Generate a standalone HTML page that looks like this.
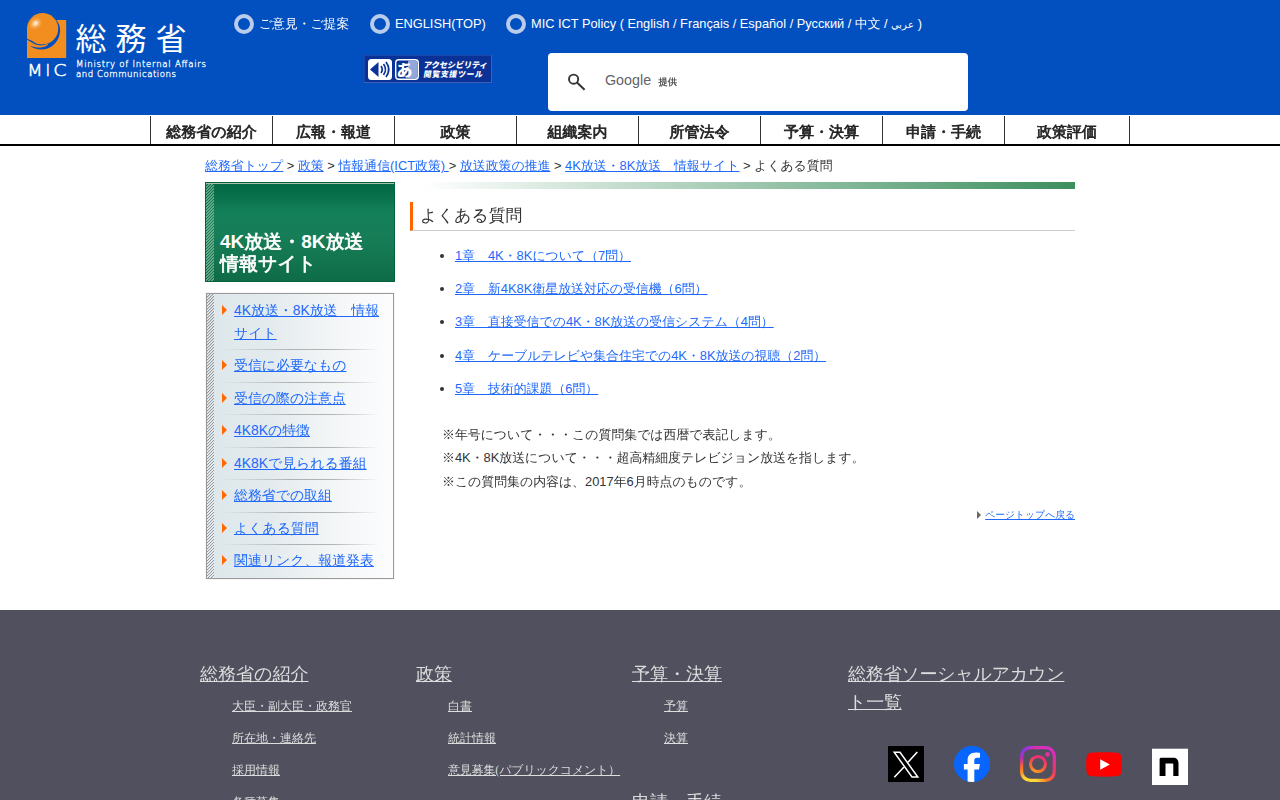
<!DOCTYPE html>
<html lang="ja">
<head>
<meta charset="utf-8">
<title>よくある質問</title>
<style>
html,body{margin:0;padding:0;}
.fb{font-weight:normal;-webkit-text-stroke:0.6px currentColor;}
body{width:1280px;height:800px;overflow:hidden;background:#fff;font-family:"Liberation Sans","WenQuanYi Zen Hei",sans-serif;color:#333;position:relative;}
a{color:#1f69fa;text-decoration:underline;}
#hd{position:absolute;left:0;top:0;width:1280px;height:115px;background:#0250c0;}
#logo{position:absolute;left:0;top:0;}
.tl{position:absolute;top:14px;height:20px;line-height:20px;font-size:12.8px;color:#fff;white-space:nowrap;}
.tl i{position:absolute;left:-25px;top:0px;width:12px;height:12px;border:4px solid #b9cceb;border-radius:50%;box-sizing:content-box;}
#acc{position:absolute;left:364px;top:55px;width:128px;height:28px;background:#0a3296;box-shadow:inset -1px -1px 0 #3f5fb8,inset 1px 1px 0 #1d45a8;}
#srch{position:absolute;left:548px;top:53px;width:420px;height:58px;background:#fff;border-radius:4px;}
#nav{position:absolute;left:0;top:115px;width:1280px;height:29px;border-bottom:2px solid #000;background:#fff;}
#nav div{position:absolute;top:1px;height:28px;width:121px;border-left:1px solid #333;text-align:center;font-weight:normal;-webkit-text-stroke:0.68px #222;font-size:15px;line-height:32px;color:#222;}
#bc{position:absolute;left:205px;top:156px;font-size:12.9px;line-height:20px;white-space:nowrap;color:#333;}
#gbar{position:absolute;left:410px;top:182px;width:665px;height:7px;background:linear-gradient(90deg,#fff 0%,#fff 2%,#3d8f5e 100%);}
#stitle{position:absolute;left:205px;top:182px;width:190px;height:100px;box-sizing:border-box;border:1px solid #05623c;background:linear-gradient(180deg,#046a46 0%,#056c48 8%,#14805a 30%,#167d57 55%,#127550 80%,#0e6b47 100%);}
#stitle:before{content:"";position:absolute;left:0;top:0;right:0;height:1px;background:#a5c2a8;}
#stitle:after{content:"";position:absolute;left:0;top:1px;width:8px;bottom:0;background:repeating-linear-gradient(135deg,rgba(170,210,180,.55) 0,rgba(170,210,180,.55) 1px,rgba(170,210,180,0) 1px,rgba(170,210,180,0) 2.12px);}
#stitle p{position:absolute;left:14px;top:48px;margin:0;color:#fff;font-weight:bold;font-size:19px;line-height:22px;white-space:nowrap;}
#stitle .fb{-webkit-text-stroke:0.72px #fff;}
#smenu{position:absolute;left:206px;top:293px;width:188px;height:286px;box-sizing:border-box;border:1px solid #999;box-shadow:0 0 0 1px #f7f7f7;background:linear-gradient(90deg,#dde7eb 0%,#e4ebee 35%,#f2f5f6 65%,#fdfdfe 100%);}
#smenu .hatch{position:absolute;left:0;top:0;width:7px;bottom:0;background:#e3ecf0 repeating-linear-gradient(135deg,#999 0,#999 0.55px,rgba(153,153,153,0) 0.8px,rgba(153,153,153,0) 2.12px);}
#smenu a{position:absolute;left:27px;font-size:13.9px;line-height:23px;white-space:nowrap;}
#smenu b{position:absolute;left:15px;width:0;height:0;margin-top:-0.3px;border-left:5.6px solid #ff6a00;border-top:5px solid transparent;border-bottom:5px solid transparent;}
#smenu s{position:absolute;left:13px;width:160px;height:1px;background:linear-gradient(90deg,rgba(170,170,170,0),#b0b0b0 45%,#b4b4b4 70%,rgba(170,170,170,0));}
#h1{position:absolute;left:410px;top:202px;width:665px;height:29px;box-sizing:border-box;border-left:3px solid #ff6600;border-bottom:1px solid #ccc;font-size:16.8px;line-height:27px;padding-left:7px;color:#333;}
.li{position:absolute;left:455px;font-size:12.9px;line-height:20px;white-space:nowrap;}
.li:before{content:"";position:absolute;left:-15px;top:8px;width:4px;height:4px;border-radius:50%;background:#333;}
.nt{position:absolute;left:442px;font-size:12.9px;line-height:20px;white-space:nowrap;color:#333;}
#ptop{position:absolute;right:205px;top:507px;font-size:9.8px;line-height:16px;white-space:nowrap;}
#ptop:before{content:"";position:absolute;left:-8.5px;top:4px;border-left:4.5px solid #666;border-top:4px solid transparent;border-bottom:4px solid transparent;}
#ft{position:absolute;left:0;top:610px;width:1280px;height:190px;background:#50505f;font-family:"Liberation Serif","WenQuanYi Zen Hei",serif;}
#ft a{color:#ddd;position:absolute;white-space:nowrap;}
#ft .h{font-size:18px;line-height:28px;}
#ft .s{font-size:12px;line-height:18px;}
</style>
</head>
<body>
<div id="hd">
<svg id="logo" width="220" height="115" viewBox="0 0 220 115">
<defs><radialGradient id="ball" cx="35.6" cy="23.4" r="7.5" gradientUnits="userSpaceOnUse" gradientTransform="rotate(-35 35.6 23.4) scale(1 0.8) translate(0 5.85)"><stop offset="0" stop-color="#fff0dc"/><stop offset="0.25" stop-color="#fcd7aa"/><stop offset="0.6" stop-color="#f6a448"/><stop offset="1" stop-color="#f28d1f"/></radialGradient></defs>
<rect x="27" y="20" width="39.2" height="38" fill="#f28d1f"/>
<path d="M56.4 20 C59 23.5 60.3 27 60.1 30.6 C59.9 35.5 58.3 39.7 55.75 42.5 C53 45.7 50 47.9 47 48.75 C44 49.6 41 49.6 38.25 49.25 C35 48.8 32 47.6 30.1 46.1 L27 39.7 L27 38.4 C28.5 39.3 30 40 31.4 40.6 C33 41.6 34.5 42.7 36.4 43.4 C38.5 44.1 40.5 44.3 42.6 44.25 L42.6 28 Z" fill="#0250c0"/>
<path d="M27 39.7 C28.5 40.6 30 41.4 31.4 42.2 C33 43.2 34.6 44.1 36.4 44.7 C38.4 45.3 40.5 45.5 42.6 45.3 C44.8 45.1 46.7 44.5 48.25 43.6 C47.8 45 46.9 45.8 45.75 46.25 C44.2 47 42.5 47.4 40.75 47.5 C38.6 47.6 36.5 47.4 34.5 47 C33 46.8 31.5 46.5 30.1 46.1 L27 46.1 Z" fill="#f28d1f"/>
<rect x="27" y="20" width="12" height="9" fill="#0250c0"/>
<circle cx="42.6" cy="28.7" r="15.6" fill="url(#ball)"/>
<g font-family="DejaVu Sans, Liberation Sans, sans-serif" font-weight="200" font-size="15.6" fill="#fff" stroke="#fff" stroke-width="0.5"><text transform="translate(27.3 76.1) scale(1.14 1)">M</text><text transform="translate(45.46 76.1)">I</text><text transform="translate(53.34 76.1) scale(1.22 1)">C</text></g>
<text x="75.5" y="49.5" font-family="Liberation Sans, Noto Sans CJK JP, sans-serif" font-size="31" fill="#fff" style="letter-spacing:9px">総務省</text>
<text x="76" y="67" font-family="DejaVu Sans, Liberation Sans, sans-serif" font-weight="200" font-size="8.6" fill="#fff" stroke="#fff" stroke-width="0.3" textLength="130" lengthAdjust="spacing">Ministry of Internal Affairs</text>
<text x="76" y="76.8" font-family="DejaVu Sans, Liberation Sans, sans-serif" font-weight="200" font-size="8.6" fill="#fff" stroke="#fff" stroke-width="0.3" textLength="100" lengthAdjust="spacing">and Communications</text>
</svg>
<div class="tl" style="left:259px"><i></i>ご意見・ご提案</div>
<div class="tl" style="left:395px"><i></i>ENGLISH(TOP)</div>
<div class="tl" style="left:531px"><i></i>MIC ICT Policy ( English / Français / Español / Русский / 中文 / <span style="font-size:10.2px">عربي</span> )</div>
<div id="acc"><svg width="128" height="28" viewBox="0 0 128 28">
<rect x="4" y="4" width="24" height="21" rx="3.5" fill="#fff"/>
<path d="M6 14.5 L14.5 7 V22 Z" fill="#0a3296"/>
<path d="M17 11 Q19.5 14.5 17 18 M19.5 9 Q23.5 14.5 19.5 20 M22 7 Q27.5 14.5 22 22" fill="none" stroke="#0a3296" stroke-width="1.7"/>
<rect x="31.7" y="4.7" width="22.6" height="19.6" rx="3" fill="#0a3296" stroke="#fff" stroke-width="1.4"/>
<path d="M44 5.4 H51.3 Q53.6 5.4 53.6 7.7 V21.3 Q53.6 23.6 51.3 23.6 H44 Z" fill="#93a8da"/>
<text x="32.6" y="20.6" font-family="Liberation Sans, Noto Sans CJK JP, sans-serif" font-weight="900" font-size="16" fill="#fff">あ</text>
<text x="61.6" y="13.4" font-family="Liberation Sans, Noto Sans CJK JP, sans-serif" font-weight="900" font-size="8.3" fill="#fff" transform="skewX(-10)" style="letter-spacing:0px" textLength="64">アクセシビリティ</text>
<text x="63.2" y="22.2" font-family="Liberation Sans, Noto Sans CJK JP, sans-serif" font-weight="900" font-size="7.8" fill="#fff" transform="skewX(-10)" textLength="59">閲覧支援ツール</text>
</svg></div>
<div id="srch"><svg width="420" height="58" viewBox="0 0 420 58" style="position:absolute;left:0;top:0">
<circle cx="25.6" cy="26.2" r="4.6" fill="none" stroke="#333" stroke-width="1.9"/>
<path d="M29 29.6 L36.6 36.7" stroke="#333" stroke-width="2" fill="none"/>
<text x="57" y="32.3" font-family="Liberation Sans, sans-serif" font-size="14.3" fill="#5f6368">Google</text>
<text x="110.5" y="32.3" font-family="Liberation Sans, WenQuanYi Zen Hei, sans-serif" font-size="9.3" fill="#444" stroke="#444" stroke-width="0.25">提供</text>
</svg></div>
</div>
<div id="nav">
<div style="left:150px">総務省の紹介</div>
<div style="left:272px">広報・報道</div>
<div style="left:394px">政策</div>
<div style="left:516px">組織案内</div>
<div style="left:638px">所管法令</div>
<div style="left:760px">予算・決算</div>
<div style="left:882px">申請・手続</div>
<div style="left:1004px;width:124px;border-right:1px solid #333">政策評価</div>
</div>
<div id="bc"><a>総務省トップ</a> &gt; <a>政策</a> &gt; <a>情報通信(ICT政策) </a>&gt; <a>放送政策の推進</a> &gt; <a>4K放送・8K放送　情報サイト</a> &gt; よくある質問</div>
<div id="gbar"></div>
<div id="stitle"><p>4K<span class="fb">放送・</span>8K<span class="fb">放送</span><br><span class="fb">情報サイト</span></p></div>
<div id="smenu"><div class="hatch"></div>
<b style="top:11px"></b><a style="top:5px">4K放送・8K放送　情報<br>サイト</a><s style="top:55px"></s>
<b style="top:66px"></b><a style="top:60px">受信に必要なもの</a><s style="top:88px"></s>
<b style="top:99px"></b><a style="top:93px">受信の際の注意点</a><s style="top:120px"></s>
<b style="top:131px"></b><a style="top:125px">4K8Kの特徴</a><s style="top:153px"></s>
<b style="top:164px"></b><a style="top:158px">4K8Kで見られる番組</a><s style="top:185px"></s>
<b style="top:196px"></b><a style="top:190px">総務省での取組</a><s style="top:218px"></s>
<b style="top:229px"></b><a style="top:223px">よくある質問</a><s style="top:250px"></s>
<b style="top:261px"></b><a style="top:255px">関連リンク、報道発表</a>
</div>
<div id="h1">よくある質問</div>
<div class="li" style="top:246px"><a>1章　4K・8Kについて（7問）</a></div>
<div class="li" style="top:279px"><a>2章　新4K8K衛星放送対応の受信機（6問）</a></div>
<div class="li" style="top:312px"><a>3章　直接受信での4K・8K放送の受信システム（4問）</a></div>
<div class="li" style="top:346px"><a>4章　ケーブルテレビや集合住宅での4K・8K放送の視聴（2問）</a></div>
<div class="li" style="top:379px"><a>5章　技術的課題（6問）</a></div>
<div class="nt" style="top:425px">※年号について・・・この質問集では西暦で表記します。</div>
<div class="nt" style="top:448px">※4K・8K放送について・・・超高精細度テレビジョン放送を指します。</div>
<div class="nt" style="top:472px">※この質問集の内容は、2017年6月時点のものです。</div>
<div id="ptop"><a>ページトップへ戻る</a></div>
<div id="ft">
<a class="h" style="left:200px;top:50px">総務省の紹介</a>
<a class="s" style="left:232px;top:87px">大臣・副大臣・政務官</a>
<a class="s" style="left:232px;top:119px">所在地・連絡先</a>
<a class="s" style="left:232px;top:151px">採用情報</a>
<a class="s" style="left:232px;top:183px">各種募集</a>
<a class="h" style="left:416px;top:50px">政策</a>
<a class="s" style="left:448px;top:87px">白書</a>
<a class="s" style="left:448px;top:119px">統計情報</a>
<a class="s" style="left:448px;top:151px;letter-spacing:-0.16px">意見募集(パブリックコメント）</a>
<a class="h" style="left:632px;top:50px">予算・決算</a>
<a class="s" style="left:664px;top:87px">予算</a>
<a class="s" style="left:664px;top:119px">決算</a>
<a class="h" style="left:632px;top:178px">申請・手続</a>
<a class="h" style="left:848px;top:50px;letter-spacing:-0.25px">総務省ソーシャルアカウン<br>ト一覧</a>
<svg style="position:absolute;left:880px;top:130px" width="320" height="60" viewBox="880 740 320 60">
<defs>
<radialGradient id="ig" cx="1029.7" cy="785" r="40" gradientUnits="userSpaceOnUse"><stop offset="0" stop-color="#fdd835"/><stop offset="0.2" stop-color="#fdd835"/><stop offset="0.45" stop-color="#f7762a"/><stop offset="0.72" stop-color="#f0306e"/><stop offset="1" stop-color="#d62fc0"/></radialGradient>
<radialGradient id="ig2" cx="1015" cy="746" r="21" gradientUnits="userSpaceOnUse"><stop offset="0" stop-color="#5a4ff0"/><stop offset="0.3" stop-color="#6a3cf5"/><stop offset="1" stop-color="#7a30f0" stop-opacity="0"/></radialGradient>
<clipPath id="fbc"><circle cx="972" cy="764" r="18"/></clipPath>
</defs>
<rect x="888" y="746" width="36" height="36" fill="#000"/>
<path d="M894.2 752.3 H900 L917.8 777 H912 Z" fill="none" stroke="#fff" stroke-width="1.5" stroke-linejoin="miter"/>
<path d="M917.3 752 L908 762.3 M904 767 L894.3 777.3" fill="none" stroke="#fff" stroke-width="1.6"/>
<circle cx="972" cy="764" r="18" fill="#0866ff"/>
<path clip-path="url(#fbc)" d="M974.3 783 V769.5 H979 L979.9 763.9 H974.3 V760.6 C974.3 758.7 975.1 757.8 977.1 757.8 H980 V753 C979.3 752.85 977.7 752.6 976 752.6 C970.8 752.6 967.6 755.3 967.6 760.1 V763.9 H963.9 V769.5 H967.6 V783 Z" fill="#fff"/>
<rect x="1021.6" y="747.6" width="32.7" height="32.7" rx="8.6" fill="none" stroke="url(#ig)" stroke-width="3.3"/>
<rect x="1021.6" y="747.6" width="32.7" height="32.7" rx="8.6" fill="none" stroke="url(#ig2)" stroke-width="3.3"/>
<circle cx="1038" cy="764" r="7.5" fill="none" stroke="url(#ig)" stroke-width="3.1"/>
<circle cx="1047.6" cy="754.4" r="2.4" fill="url(#ig)"/>
<path d="M1086.2 764.5 C1086.2 758 1086.6 755.3 1088 753.9 C1089.5 752.6 1094 752.3 1104 752.3 C1114 752.3 1118.5 752.6 1120 753.9 C1121.4 755.3 1121.8 758 1121.8 764.5 C1121.8 771 1121.4 773.7 1120 775.1 C1118.5 776.4 1114 776.7 1104 776.7 C1094 776.7 1089.5 776.4 1088 775.1 C1086.6 773.7 1086.2 771 1086.2 764.5 Z" fill="#ff0000"/>
<path d="M1100.2 759.2 L1109.8 764.5 L1100.2 769.8 Z" fill="#fff"/>
<rect x="1152" y="748.7" width="36" height="36.3" fill="#fff"/>
<path d="M1159.6 776 V758.8 L1160.6 757.8 H1173 C1176.6 757.8 1178.5 759.8 1178.5 763.3 V776 H1173.3 V764.6 C1173.3 763.9 1173 763.6 1172.3 763.6 H1165.5 V776 Z" fill="#000"/>
</svg>
</div>
</body>
</html>
